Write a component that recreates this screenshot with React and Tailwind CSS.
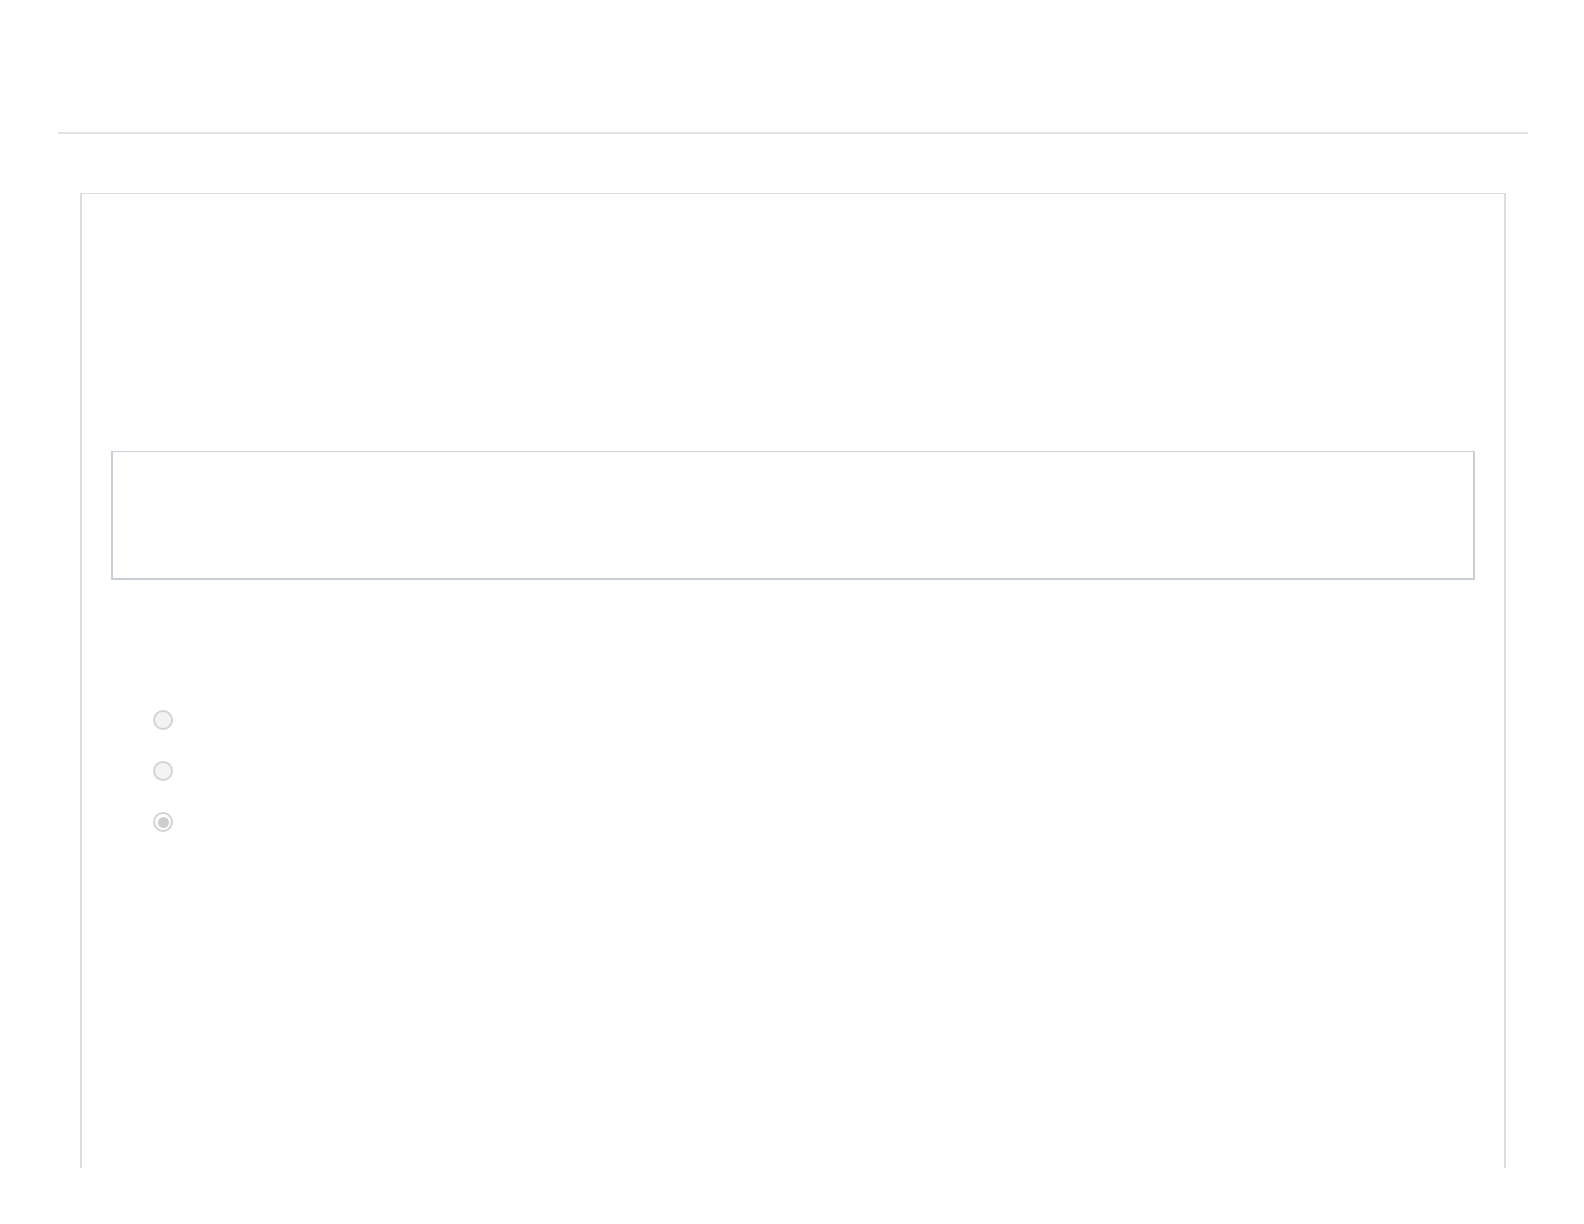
import React from "react";

function Radio({ checked }) {
  return (
    <div className="flex h-[20px] items-center">
      <div
        className={
          "flex h-[20px] w-[20px] items-center justify-center rounded-full border-2 border-[#d3d3d3] " +
          (checked ? "bg-white" : "bg-[#f3f3f3]")
        }
      >
        {checked && <div className="h-[11px] w-[11px] rounded-full bg-[#cdcdcd]" />}
      </div>
    </div>
  );
}

export default function App() {
  return (
    <div className="min-h-screen w-full bg-white font-['Liberation_Sans',sans-serif]">
      <div className="h-[132px]" />
      <div className="ml-[58px] mr-[56px] h-[2px] bg-[#e6e2e4]" />
      <div className="ml-[80px] mr-[78px] mt-[59px] h-[975px] border-l-2 border-r-2 border-t border-[#dddddd] px-[29px] pt-[257px]">
        <div className="h-[129px] border-x-2 border-b-2 border-t border-[#c9ced7] bg-white" />
        <div className="ml-[42px] mt-[130px] flex flex-col gap-[31px]">
          <Radio />
          <Radio />
          <Radio checked />
        </div>
      </div>
    </div>
  );
}
